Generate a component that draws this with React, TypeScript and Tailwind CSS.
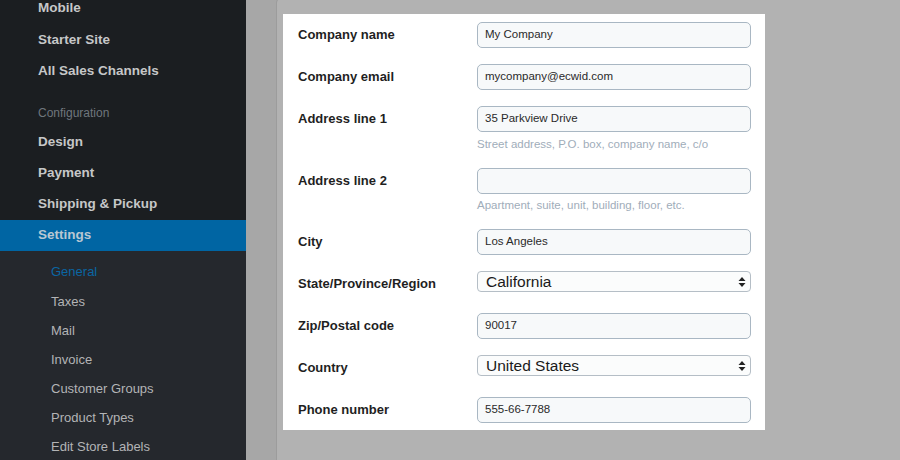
import React from 'react'

const mainTop = ['Mobile', 'Starter Site', 'All Sales Channels']
const mainConfig = ['Design', 'Payment', 'Shipping & Pickup']
const subItems = ['General', 'Taxes', 'Mail', 'Invoice', 'Customer Groups', 'Product Types', 'Edit Store Labels']

const fields = [
  { label: 'Company name', value: 'My Company' },
  { label: 'Company email', value: 'mycompany@ecwid.com' },
  { label: 'Address line 1', value: '35 Parkview Drive', hint: 'Street address, P.O. box, company name, c/o' },
  { label: 'Address line 2', value: '', hint: 'Apartment, suite, unit, building, floor, etc.' },
  { label: 'City', value: 'Los Angeles' },
  { label: 'State/Province/Region', value: 'California', select: true },
  { label: 'Zip/Postal code', value: '90017' },
  { label: 'Country', value: 'United States', select: true },
  { label: 'Phone number', value: '555-66-7788' },
]

const Arrows = () => (
  <svg width="8" height="12" viewBox="0 0 8 12" className="text-[#222]">
    <path d="M4 1 L7.5 5 H0.5 Z" fill="currentColor" />
    <path d="M4 11 L7.5 7 H0.5 Z" fill="currentColor" />
  </svg>
)

const App = () => {
  return (
    <div className="w-[900px] h-[460px] flex overflow-hidden font-['Liberation_Sans',Arial,sans-serif]">
      {/* Sidebar */}
      <div className="w-[246px] shrink-0 flex flex-col bg-[#1b1e21]">
        <div className="-mt-[7.5px]">
          {mainTop.map((item) => (
            <div key={item} className="h-[31.5px] flex items-center pl-[38px] text-[13.5px] font-bold text-[#c6c7c8]">
              {item}
            </div>
          ))}
          <div className="h-[39.5px] flex items-end pb-[4.5px] pl-[38px] text-[12px] leading-[18px] text-[#6f767d]">
            Configuration
          </div>
          {mainConfig.map((item) => (
            <div key={item} className="h-[31px] flex items-center pl-[38px] text-[13.5px] font-bold text-[#c6c7c8]">
              {item}
            </div>
          ))}
          <div className="h-[31px] flex items-center pl-[38px] text-[13.5px] font-bold text-[#b9c7d2] bg-[#0065a3]">
            Settings
          </div>
        </div>
        <div className="flex-1 bg-[#25282d] pt-[7px]">
          {subItems.map((item, i) => (
            <div
              key={item}
              className={`h-[29.2px] flex items-center pl-[51px] text-[13px] ${i === 0 ? 'text-[#0a66a3]' : 'text-[#b3b4b6]'}`}
            >
              {item}
            </div>
          ))}
        </div>
      </div>

      {/* Main */}
      <div className="flex-1 bg-[#a7a7a7] pl-[30px]">
        <div className="h-[470px] -mt-[3px] bg-[#b2b2b2] border-l border-t border-[#9c9c9c] rounded-tl-[6px] pl-[6px] pt-[16px]">
          <div className="w-[482px] h-[416px] bg-white pl-[15px] pr-[14px] pt-[8px] flex flex-col gap-[16px]">
            {fields.map((f) => (
              <div key={f.label} className="flex">
                <div className="w-[179px] h-[26px] flex items-center text-[13px] font-bold text-[#1f1f1f]">
                  {f.label}
                </div>
                <div className="flex-1">
                  {f.select ? (
                    <div className="h-[21px] flex items-center justify-between pl-[8px] pr-[4px] rounded-[4px] border border-[#b5bec6] bg-[#fbfcfc] text-[15.5px] text-[#1a1a1a]">
                      <span>{f.value}</span>
                      <Arrows />
                    </div>
                  ) : (
                    <div className="h-[26px] flex items-center px-[7px] rounded-[5px] border border-[#a9b7c3] bg-[#f7f9fa] text-[11.5px] text-[#2a2a2a]">
                      {f.value}
                    </div>
                  )}
                  {f.hint && (
                    <div className="mt-[3.5px] leading-4 text-[11.5px] text-[#9fadba]">{f.hint}</div>
                  )}
                </div>
              </div>
            ))}
          </div>
        </div>
      </div>
    </div>
  )
}

export default App
